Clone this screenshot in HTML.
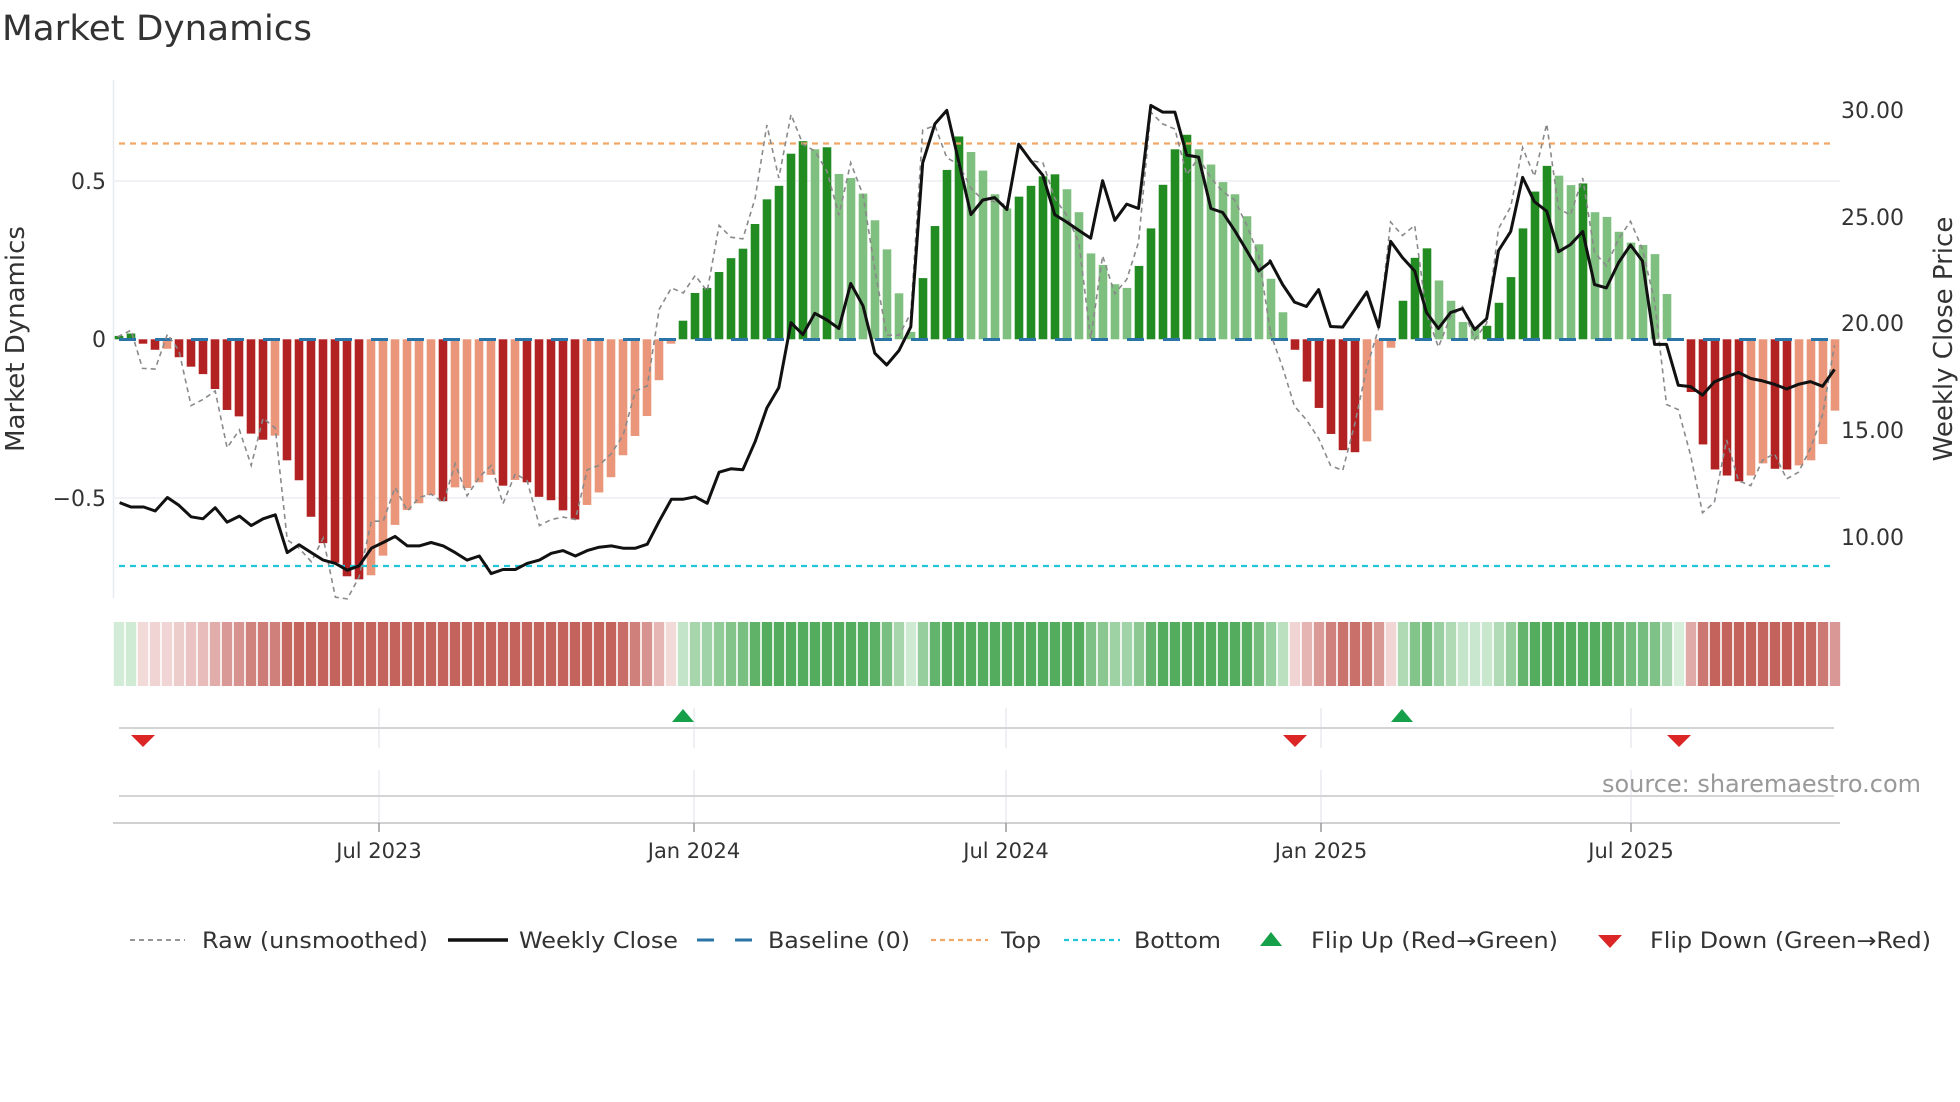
<!DOCTYPE html>
<html><head><meta charset="utf-8"><style>
html,body{margin:0;padding:0;background:#fff;}
svg{display:block;font-family:"DejaVu Sans","Liberation Sans",sans-serif;}
</style></head><body>
<svg id="c" width="1960" height="1102" viewBox="0 0 1960 1102" xmlns="http://www.w3.org/2000/svg">
<rect width="1960" height="1102" fill="#fff"/>
<text x="2" y="40" font-size="35" fill="#333" textLength="310" lengthAdjust="spacingAndGlyphs">Market Dynamics</text>
<line x1="113.5" y1="80" x2="113.5" y2="598" stroke="#e8eaf2" stroke-width="1.5"/>
<line x1="113" y1="181" x2="1840" y2="181" stroke="#eceef4" stroke-width="1.5"/>
<line x1="113" y1="498" x2="1840" y2="498" stroke="#eceef4" stroke-width="1.5"/>
<g font-size="22" fill="#333" text-anchor="end">
<text x="106" y="189">0.5</text>
<text x="106" y="347">0</text>
<text x="106" y="506">−0.5</text>
</g>
<g font-size="22" fill="#333">
<text x="1841" y="118">30.00</text>
<text x="1841" y="225">25.00</text>
<text x="1841" y="331">20.00</text>
<text x="1841" y="438">15.00</text>
<text x="1841" y="545">10.00</text>
</g>
<text transform="translate(24,339) rotate(-90)" font-size="26" fill="#333" text-anchor="middle">Market Dynamics</text>
<text transform="translate(1952,339) rotate(-90)" font-size="26" fill="#333" text-anchor="middle">Weekly Close Price</text>
<g id="bars"></g>
<line x1="119" y1="143.5" x2="1832" y2="143.5" stroke="#f0a868" stroke-width="2.2" stroke-dasharray="6,5"/>
<line x1="119" y1="566" x2="1832" y2="566" stroke="#22c4d8" stroke-width="2.2" stroke-dasharray="6,5"/>
<line x1="119" y1="339.5" x2="1832" y2="339.5" stroke="#2a74a8" stroke-width="3" stroke-dasharray="17,19"/>
<polyline id="raw" fill="none" stroke="#8a8a8a" stroke-width="1.6" stroke-dasharray="5,4"/>
<polyline id="close" fill="none" stroke="#111" stroke-width="3" stroke-linejoin="round"/>
<g id="strip"></g>
<g stroke="#e6e8ee" stroke-width="1.3">
<line x1="379" y1="708" x2="379" y2="748"/><line x1="379" y1="770" x2="379" y2="822"/>
<line x1="694" y1="708" x2="694" y2="748"/><line x1="694" y1="770" x2="694" y2="822"/>
<line x1="1006" y1="708" x2="1006" y2="748"/><line x1="1006" y1="770" x2="1006" y2="822"/>
<line x1="1321" y1="708" x2="1321" y2="748"/><line x1="1321" y1="770" x2="1321" y2="822"/>
<line x1="1631" y1="708" x2="1631" y2="748"/><line x1="1631" y1="770" x2="1631" y2="822"/>
</g>
<line x1="119" y1="728" x2="1834" y2="728" stroke="#d4d4d4" stroke-width="2"/>
<line x1="119" y1="796" x2="1834" y2="796" stroke="#d4d4d4" stroke-width="2"/>
<line x1="113" y1="823" x2="1840" y2="823" stroke="#d0d0d0" stroke-width="2"/>
<g stroke="#999" stroke-width="1.5">
<line x1="379" y1="823" x2="379" y2="832"/><line x1="694" y1="823" x2="694" y2="832"/><line x1="1006" y1="823" x2="1006" y2="832"/><line x1="1321" y1="823" x2="1321" y2="832"/><line x1="1631" y1="823" x2="1631" y2="832"/>
</g>
<g fill="#16a04a">
<polygon points="672,722 683,709 694,722"/>
<polygon points="1391,722 1402,709 1413,722"/>
</g>
<g fill="#dc2626">
<polygon points="131,735 155,735 143,747"/>
<polygon points="1283,735 1307,735 1295,747"/>
<polygon points="1667,735 1691,735 1679,747"/>
</g>
<text x="1921" y="792" font-size="24" fill="#999" text-anchor="end" textLength="319" lengthAdjust="spacingAndGlyphs">source: sharemaestro.com</text>
<g font-size="21" fill="#333" text-anchor="middle">
<text x="379" y="858">Jul 2023</text>
<text x="694" y="858">Jan 2024</text>
<text x="1006" y="858">Jul 2024</text>
<text x="1321" y="858">Jan 2025</text>
<text x="1631" y="858">Jul 2025</text>
</g>
<g font-size="22" fill="#333">
<line x1="130" y1="940" x2="185" y2="940" stroke="#888" stroke-width="1.8" stroke-dasharray="5,4"/>
<text x="202" y="948" textLength="226" lengthAdjust="spacingAndGlyphs">Raw (unsmoothed)</text>
<line x1="448" y1="940" x2="508" y2="940" stroke="#111" stroke-width="3.5"/>
<text x="519" y="948" textLength="159" lengthAdjust="spacingAndGlyphs">Weekly Close</text>
<line x1="697" y1="940" x2="752" y2="940" stroke="#2a74a8" stroke-width="3" stroke-dasharray="17,21"/>
<text x="768" y="948" textLength="142" lengthAdjust="spacingAndGlyphs">Baseline (0)</text>
<line x1="931" y1="940" x2="988" y2="940" stroke="#f0a868" stroke-width="2.2" stroke-dasharray="5,4"/>
<text x="1001" y="948" textLength="40" lengthAdjust="spacingAndGlyphs">Top</text>
<line x1="1064" y1="940" x2="1120" y2="940" stroke="#22c4d8" stroke-width="2.2" stroke-dasharray="5,4"/>
<text x="1134" y="948" textLength="87" lengthAdjust="spacingAndGlyphs">Bottom</text>
<polygon points="1260,946 1271,932 1282,946" fill="#16a04a"/>
<text x="1311" y="948" textLength="247" lengthAdjust="spacingAndGlyphs">Flip Up (Red→Green)</text>
<polygon points="1598,935 1622,935 1610,948" fill="#dc2626"/>
<text x="1650" y="948" textLength="281" lengthAdjust="spacingAndGlyphs">Flip Down (Green→Red)</text>
</g>
</svg>
<script>
(function(){
var NS="http://www.w3.org/2000/svg";
var B="757D 750D 780R 798R 795S 820R 848R 870R 914R 976R 995R 1046R 1064R 1052S 1125R 1184R 1292R 1370R 1428R 1468R 1477R 1465S 1407S 1316S 1272S 1252S 1228S 1246R 1205S 1207S 1190S 1168S 1200R 1183S 1190R 1233R 1243R 1273R 1300R 1257S 1220S 1175S 1110S 1053S 994S 888S 780S 712D 630D 615D 568D 527D 499D 426D 353D 313D 218D 181D 205L 199D 278L 290L 336L 415L 501L 631L 745L 586D 432D 266D 167D 213L 268L 338L 380L 345D 313D 285D 279D 323L 391L 513L 547L 604L 615L 550D 439D 310D 205D 162D 205L 250L 302L 338L 403L 486L 588L 687L 798R 892R 970R 1047R 1095R 1101R 1069S 977S 792S 653D 526D 498D 593L 653L 716L 730L 727D 659D 583D 439D 330D 254D 283L 311L 306D 391L 405L 449L 481L 488L 515L 633L 767L 923R 1078R 1152R 1170R 1187R 1170S 1134S 1150R 1152R 1140S 1125S 1077S 978S".split(" ");
var col={D:"#228b22",L:"#7fbf7f",R:"#b22222",S:"#e9967a"};
var Y=function(z){return 80+z/2.958;};
var z0=Y(767);
var bars=document.getElementById("bars"),strip=document.getElementById("strip");
function mix(a,b,t){return "rgb("+[0,1,2].map(function(k){return Math.round(a[k]+(b[k]-a[k])*t);}).join(",")+")";}
for(var i=0;i<B.length;i++){
 var v=parseFloat(B[i]),c=B[i].slice(-1),x=119+12*i;
 var y=Y(v),top=Math.min(y,z0),h=Math.max(Math.abs(y-z0),0.01);
 var r=document.createElementNS(NS,"rect");
 r.setAttribute("x",x-4.3);r.setAttribute("y",top);r.setAttribute("width",8.6);r.setAttribute("height",h);
 r.setAttribute("fill",col[c]);bars.appendChild(r);
 var val=(z0-y)/158.6, t=Math.min(Math.abs(val)/0.8,1);
 var s=document.createElementNS(NS,"rect");
 s.setAttribute("x",x-6+0.8);s.setAttribute("y",622);s.setAttribute("width",10.4);s.setAttribute("height",64);
 var g=val>=0;
 s.setAttribute("fill",g?mix([214,238,218],[84,172,94],t):mix([244,222,222],[196,98,92],t));
 strip.appendChild(s);
}
function pts(arr,off){var o=[];for(var k=0;k<arr.length;k+=2)o.push((off+arr[k]/2.613).toFixed(1)+","+Y(arr[k+1]).toFixed(1));return o;}
var c2=[25,1250,55,1263,88,1263,118,1275,150,1235,180,1258,212,1292,243,1298,275,1265,306,1308,338,1290,369,1318,400,1298,432,1286,463,1398,494,1375,526,1398,557,1420,589,1430,620,1450,651,1437,683,1385,714,1368,745,1350,777,1378,808,1378,839,1368,871,1378,902,1398,933,1420,965,1408,996,1460,1027,1448,1059,1448,1090,1430,1122,1420,1153,1400,1184,1392,1216,1408,1247,1392,1278,1382,1310,1378,1341,1385,1373,1385,1404,1373,1435,1305,1467,1240,1498,1240,1529,1233];
var c3=[45,1252,76,1160,107,1150,138,1153,170,1070,201,970,232,910,264,718,295,753,326,690,358,710,389,735,420,602,452,668,483,808,514,843,546,800,577,730,608,245,640,130,671,90,703,245,734,398,765,355,796,348,828,383,859,190,890,238,922,282,953,398,984,420,1016,445,1047,468,1078,298,1110,415,1141,367,1172,380,1204,75,1235,95,1267,95,1298,222,1329,228,1361,380,1392,392,1423,445,1455,505,1486,565,1517,537];
var c4=[0,535,33,605,64,657,95,670,127,620,158,729,190,731,221,680,253,627,284,731,315,477,346,525,378,565,409,688,440,735,472,688,503,676,535,738,566,706,597,505,629,448,660,288,691,360,723,388,754,508,785,487,817,448,848,605,879,615,911,540,942,488,973,535,1005,782,1036,782,1067,903,1099,907,1130,932,1161,893,1193,878,1224,865,1256,883,1287,890,1318,900,1350,914,1381,900,1412,892,1444,906,1475,856];
document.getElementById("close").setAttribute("points",pts(c2,110).concat(pts(c3,690),pts(c4,1270)).join(" "));
var r2=[20,760,55,740,85,853,118,855,150,752,180,800,212,963,243,945,275,920,306,1088,338,1035,369,1140,400,1000,432,1030,463,1360,494,1385,526,1425,557,1355,589,1530,620,1535,651,1470,683,1305,714,1305,745,1205,777,1275,808,1235,839,1225,871,1250,902,1135,933,1230,965,1175,996,1140,1027,1253,1059,1165,1090,1185,1122,1318,1153,1300,1184,1293,1216,1300,1247,1153,1278,1140,1310,1105,1341,1050,1373,920,1404,905,1435,678,1467,615,1498,630,1529,578];
var r3=[45,625,76,430,107,465,138,470,170,350,201,133,232,290,264,102,295,190,326,210,358,270,389,400,420,245,452,340,483,560,514,755,546,755,577,690,608,148,640,135,671,230,703,250,734,320,765,355,796,360,828,370,859,195,890,238,922,245,953,350,984,400,1016,480,1047,765,1078,520,1110,632,1141,590,1172,480,1204,95,1235,130,1267,145,1298,280,1329,230,1361,290,1392,330,1423,355,1455,430,1486,520,1517,750];
var r4=[0,745,33,850,64,965,95,1005,127,1060,158,1140,190,1155,221,1020,253,850,284,735,315,420,346,460,378,430,409,690,440,790,472,700,503,670,535,768,566,720,597,440,629,375,660,200,691,285,723,130,754,380,785,400,817,290,848,510,879,550,911,470,942,418,973,500,1005,655,1036,960,1067,975,1099,1110,1130,1280,1161,1250,1193,1065,1224,1185,1256,1200,1287,1125,1318,1105,1350,1180,1381,1160,1412,1090,1444,990,1475,785];
document.getElementById("raw").setAttribute("points",pts(r2,110).concat(pts(r3,690),pts(r4,1270)).join(" "));
})();
</script>
</body></html>
